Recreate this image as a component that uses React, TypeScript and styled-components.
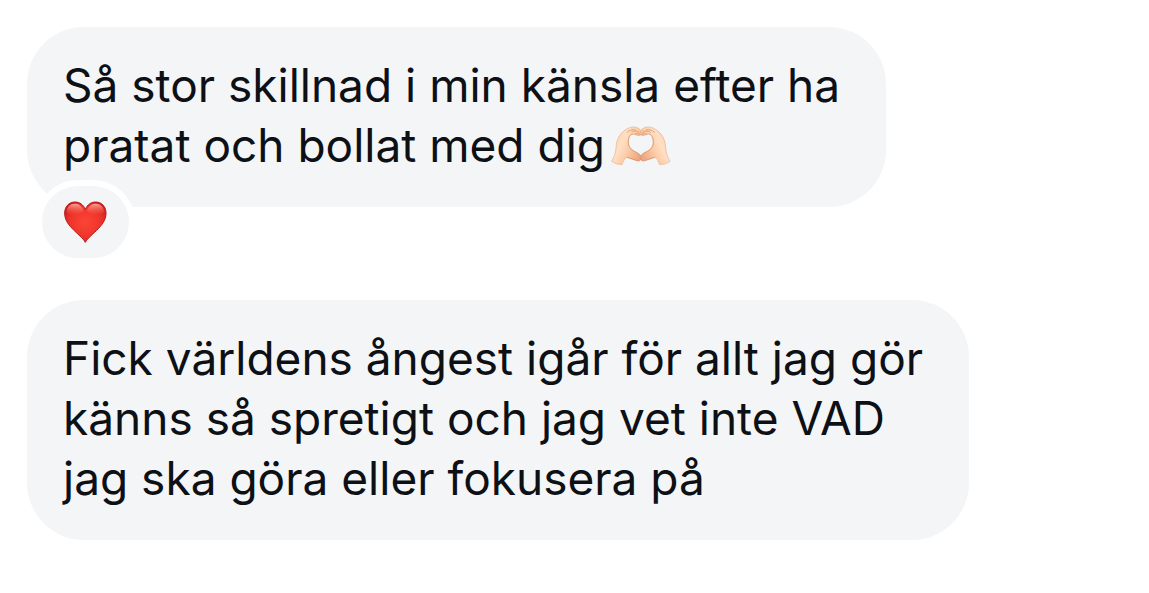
import React from "react";
import styled, { createGlobalStyle } from "styled-components";

const GlobalStyle = createGlobalStyle`
  body {
    margin: 0;
    background: #fff;
    color: #0d1014;
    font-family: Inter, "Liberation Sans", sans-serif;
  }
`;

const Thread = styled.main`
  display: flex;
  flex-direction: column;
  align-items: flex-start;
  gap: 93px;
  padding: 27px;
`;

const Message = styled.article`
  position: relative;
`;

const Bubble = styled.p`
  margin: 0;
  padding: 28px 46px 32px 36px;
  border-radius: 57px;
  background: #f3f5f6;
  font-size: 46px;
  line-height: 60px;
`;

const Reaction = styled.button`
  position: absolute;
  left: 9px;
  bottom: -57px;
  display: flex;
  align-items: center;
  justify-content: center;
  width: 99px;
  height: 84px;
  padding: 0;
  border: 6px solid #fff;
  border-radius: 42px;
  background: #f3f5f6;
`;

const HandsIcon = styled.svg`
  width: 60px;
  height: 42px;
  margin-left: 6px;
  vertical-align: -5px;
`;

const HeartIcon = styled.svg`
  width: 44px;
  height: 44px;
`;

const Hand = () => (
  <>
    <path
      d="M36 151C43 139 48 127 49 112C49 96 54 79 65 67C75 56 90 47 104 48C114 49 124 55 125 63C126 70 122 74 116 74C110 74 106 68 100 69C91 70 86 80 86 93C86 106 92 114 104 121C113 125 124 131 125 139C125 148 119 151 112 149C102 146 92 142 82 139C75 142 71 149 67 161Q48 161 36 151Z"
      fill="url(#skin)"
      stroke="#e7b18c"
      strokeWidth="2"
      strokeLinejoin="round"
    />
    <path
      d="M100 69C91 70 86 80 86 93C86 106 92 114 104 121C113 125 124 131 125 139C125 148 119 151 112 149C102 146 92 142 82 139"
      fill="none"
      stroke="#dc8f63"
      strokeWidth="3"
      strokeOpacity="0.7"
    />
    <path
      d="M82 64C90 57 98 54 107 57M96 63C103 58 113 60 118 65M104 70C111 66 118 69 122 71"
      fill="none"
      stroke="#d98b60"
      strokeWidth="3"
      strokeOpacity="0.7"
      strokeLinecap="round"
    />
  </>
);

const HeartHands = () => (
  <HandsIcon viewBox="34 42 180 126" role="img" aria-label="Händer som formar ett hjärta">
    <defs>
      <linearGradient id="skin" x1="0" y1="0.2" x2="1" y2="0.8">
        <stop offset="0" stopColor="#fbcfac" />
        <stop offset="0.35" stopColor="#ffdfc3" />
        <stop offset="0.6" stopColor="#fbcba6" />
        <stop offset="1" stopColor="#e9a179" />
      </linearGradient>
    </defs>
    <Hand />
    <g transform="translate(247 0) scale(-1 1)">
      <Hand />
    </g>
  </HandsIcon>
);

const Heart = () => (
  <HeartIcon viewBox="0 0 132 132" aria-hidden="true">
    <defs>
      <radialGradient id="heart" cx="0.5" cy="0.5" r="0.6">
        <stop offset="0" stopColor="#fb4536" />
        <stop offset="0.6" stopColor="#ef352b" />
        <stop offset="1" stopColor="#cb1e1d" />
      </radialGradient>
      <linearGradient id="shine" x1="0" y1="0" x2="0" y2="1">
        <stop offset="0" stopColor="#ffb0a5" stopOpacity="0.9" />
        <stop offset="1" stopColor="#ff6759" stopOpacity="0" />
      </linearGradient>
    </defs>
    <path
      d="M64 127C57 114 41 103 24 85C9 69 2 56 2 39C2 20 15 6 33 6C47 6 58 14 64 28C70 14 81 6 95 6C113 6 126 20 126 39C126 56 119 69 104 85C87 103 71 114 64 127Z"
      fill="url(#heart)"
      stroke="#b9171c"
      strokeWidth="3"
    />
    <path
      d="M8 37C8 21 19 11 33 11C46 11 55 19 59 32C47 46 19 50 8 37ZM120 37C120 21 109 11 95 11C82 11 73 19 69 32C81 46 109 50 120 37Z"
      fill="url(#shine)"
    />
  </HeartIcon>
);

export default function App() {
  return (
    <>
      <GlobalStyle />
      <Thread>
        <Message>
          <Bubble>
            Så stor skillnad i min känsla efter ha
            <br />
            pratat och bollat med dig
            <HeartHands />
          </Bubble>
          <Reaction type="button" aria-label="Hjärta">
            <Heart />
          </Reaction>
        </Message>
        <Message>
          <Bubble>
            Fick världens ångest igår för allt jag gör
            <br />
            känns så spretigt och jag vet inte VAD
            <br />
            jag ska göra eller fokusera på
          </Bubble>
        </Message>
      </Thread>
    </>
  );
}
